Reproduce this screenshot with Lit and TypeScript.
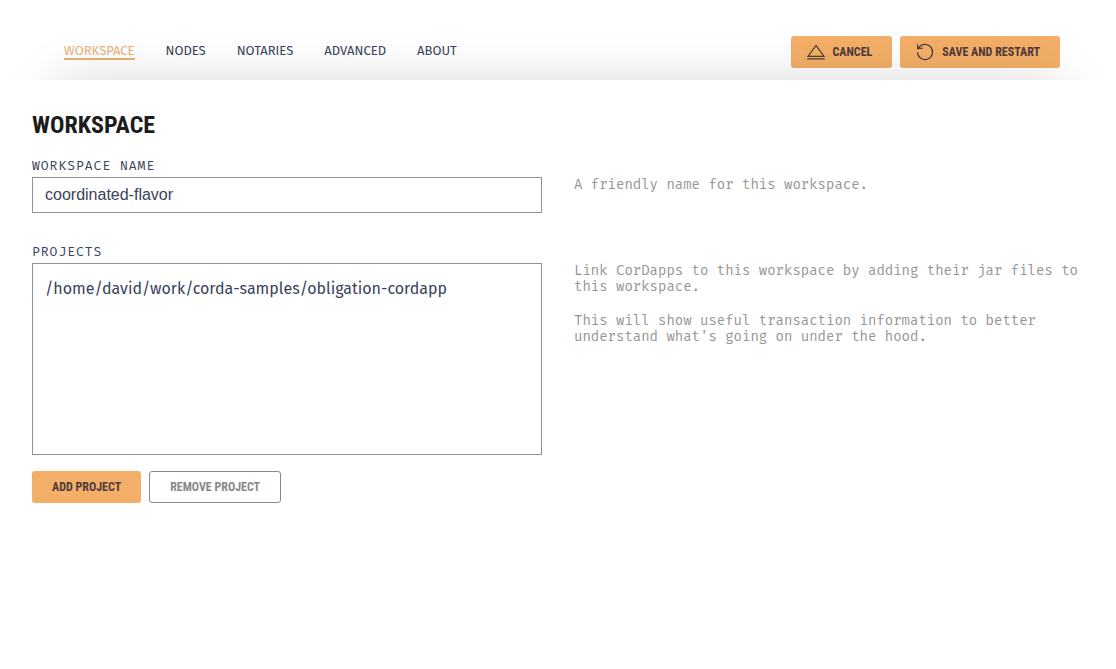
import { LitElement, html, css, svg } from "lit";
import { customElement, state } from "lit/decorators.js";
import { classMap } from "lit/directives/class-map.js";

const ejectIcon = svg`<svg class="icon" viewBox="0 0 20 20" aria-hidden="true">
  <path d="M10 3.4 L18 14.4 H2 Z M1.2 16.8 H18.8" />
</svg>`;

const restartIcon = svg`<svg class="icon" viewBox="0 0 20 20" aria-hidden="true">
  <path d="M3.4 6.2 A7.6 7.6 0 1 1 2.4 10.3 M2.6 2.2 V6.6 L7.8 6.2" />
</svg>`;

@customElement("app-root")
export class AppRoot extends LitElement {
  static styles = css`
    :host {
      display: flex;
      flex-direction: column;
      min-height: 100vh;
      background: #fff;
      color: #39435a;
      font-family: "Fira Sans", "Noto Sans", sans-serif;
    }
    * {
      box-sizing: border-box;
    }
    .header {
      display: flex;
      justify-content: space-between;
      align-items: flex-end;
      height: 80px;
      padding: 0 56px 12px 64px;
    }
    .nav {
      display: flex;
      gap: 31px;
      padding-bottom: 8px;
    }
    .tab {
      font-size: 13px;
      line-height: 14px;
      border-bottom: 2px solid transparent;
      color: inherit;
      text-decoration: none;
    }
    .tab.active {
      color: #e9b176;
      border-color: #e9b176;
    }
    .actions {
      display: flex;
      gap: 8px;
    }
    .button {
      display: inline-flex;
      align-items: center;
      gap: 7px;
      height: 32px;
      padding: 0 20px;
      border: 0;
      border-radius: 3px;
      background: #f3af67;
      color: #4f3a3c;
      font: bold 12px/16px "Roboto Condensed", "Liberation Sans Narrow", "Roboto", sans-serif;
      white-space: nowrap;
    }
    .button.with-icon {
      padding-left: 15px;
    }
    .button.outline {
      border: 1px solid #888;
      background: #fff;
      color: #888;
    }
    .icon {
      width: 20px;
      height: 20px;
      fill: none;
      stroke: currentColor;
      stroke-width: 1.2;
    }
    .main {
      position: relative;
      flex: 1;
      padding: 29px 32px 32px;
      background: #fff;
      box-shadow: 0 -50px 50px -55px rgba(0, 0, 0, 0.18);
    }
    .title {
      margin: 0 0 16px;
      color: #1c1c1c;
      font: bold 24px/32px "Roboto Condensed", "Liberation Sans Narrow", "Roboto", sans-serif;
    }
    .row {
      display: grid;
      grid-template-columns: 1fr 1fr;
      column-gap: 32px;
      margin-bottom: 30px;
    }
    .field {
      display: flex;
      flex-direction: column;
    }
    .label {
      padding-top: 1px;
      margin-bottom: 4px;
      font: 13px/15px "Fira Mono", "Fira Code", "Liberation Mono", monospace;
      letter-spacing: 1px;
    }
    .input {
      width: 100%;
      height: 36px;
      padding: 0 12px;
      border: 1px solid #929292;
      border-radius: 0;
      background: #fff;
      color: inherit;
      font: 16px/20px "Liberation Sans", sans-serif;
    }
    .projects {
      height: 192px;
      margin: 0 0 16px;
      padding: 13px 12px;
      border: 1px solid #929292;
      list-style: none;
      font-size: 16px;
      line-height: 24px;
      overflow: auto;
    }
    .buttons {
      display: flex;
      gap: 8px;
    }
    .help {
      padding-top: 20px;
      color: #969696;
      font: 14px/16px "Fira Mono", "Fira Code", "Liberation Mono", monospace;
    }
    .help p {
      margin: 0 0 18px;
    }
  `;

  @state() private tab = "WORKSPACE";
  @state() private projects = ["/home/david/work/corda-samples/obligation-cordapp"];

  private tabs = ["WORKSPACE", "NODES", "NOTARIES", "ADVANCED", "ABOUT"];

  render() {
    return html`
      <header class="header">
        <nav class="nav">
          ${this.tabs.map(
            (name) => html`<a
              href="#${name.toLowerCase()}"
              class=${classMap({ tab: true, active: name === this.tab })}
              @click=${() => (this.tab = name)}
              >${name}</a
            >`
          )}
        </nav>
        <div class="actions">
          <button class="button with-icon" type="button">${ejectIcon}CANCEL</button>
          <button class="button with-icon" type="button">${restartIcon}SAVE AND RESTART</button>
        </div>
      </header>
      <main class="main">
        <h1 class="title">WORKSPACE</h1>
        <section class="row">
          <div class="field">
            <label class="label" for="name">WORKSPACE NAME</label>
            <input class="input" id="name" type="text" value="coordinated-flavor" />
          </div>
          <div class="help"><p>A friendly name for this workspace.</p></div>
        </section>
        <section class="row">
          <div class="field">
            <span class="label" id="projects-label">PROJECTS</span>
            <ul class="projects" aria-labelledby="projects-label">
              ${this.projects.map((path) => html`<li>${path}</li>`)}
            </ul>
            <div class="buttons">
              <button class="button" type="button">ADD PROJECT</button>
              <button class="button outline" type="button">REMOVE PROJECT</button>
            </div>
          </div>
          <div class="help">
            <p>Link CorDapps to this workspace by adding their jar files to this workspace.</p>
            <p>This will show useful transaction information to better understand what's going on under the hood.</p>
          </div>
        </section>
      </main>
    `;
  }
}
